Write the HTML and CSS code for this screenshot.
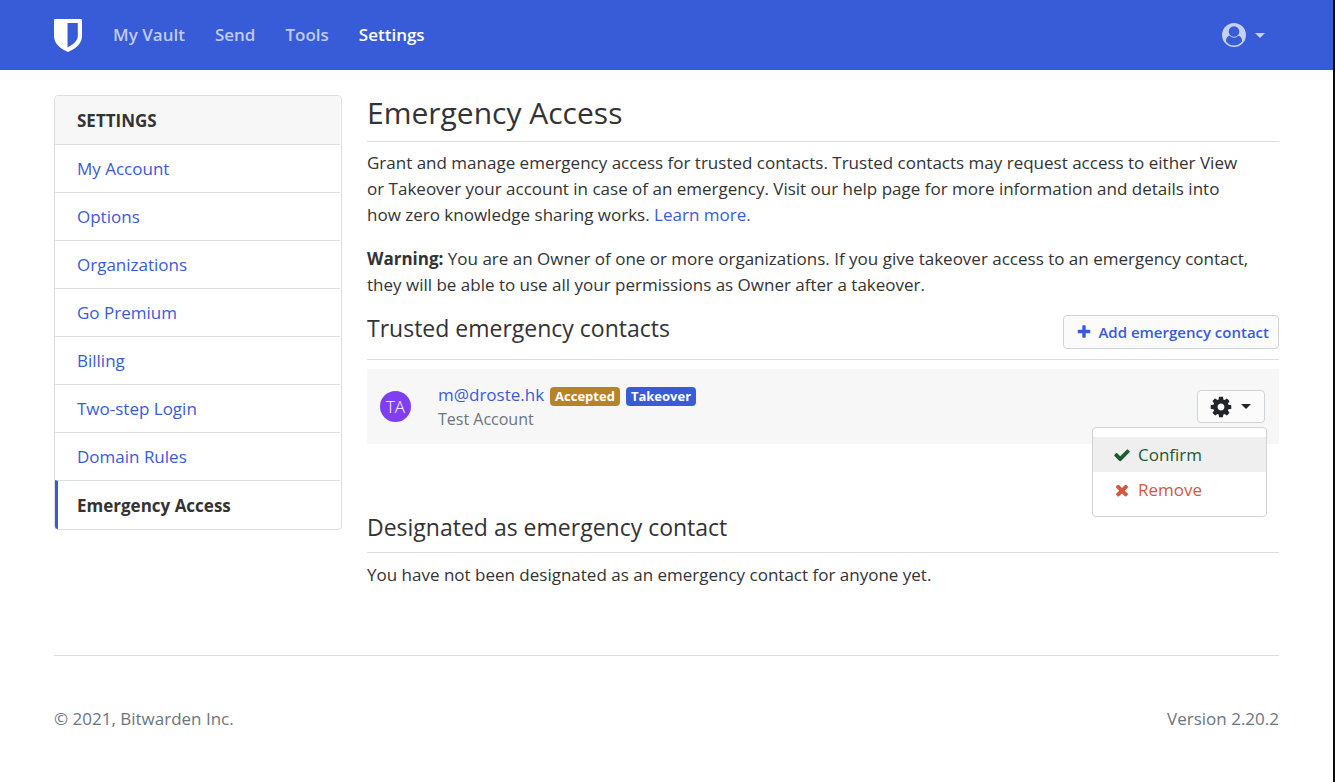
FILE: index.html
```
<!DOCTYPE html>
<html lang="en">
<head>
  <meta charset="UTF-8">
  <meta name="viewport" content="width=device-width, initial-scale=1">
  <title>Emergency Access | Bitwarden Web Vault</title>
  <link rel="stylesheet" href="styles.css">
</head>
<body>
<header class="navbar">
  <div class="container navbar-inner">
    <a href="#" class="logo" aria-label="Bitwarden">
      <svg viewBox="0 0 28 33" width="28" height="33"><path fill="#fff" fill-rule="evenodd" d="M1.200 0h25.600Q28 0 28 1.200V17c0 7-5.500 12.500-14 16C5.500 29.500 0 24 0 17V1.200Q0 0 1.200 0zM13.500 4v24.500c6-3 10.300-7 10.300-11.500V4z"/></svg>
    </a>
    <nav class="nav">
      <a href="#">My Vault</a>
      <a href="#">Send</a>
      <a href="#">Tools</a>
      <a href="#" class="active">Settings</a>
    </nav>
    <button type="button" class="user-menu" aria-label="Account">
      <svg viewBox="0 0 24 24" width="24" height="24"><path fill="currentColor" fill-rule="evenodd" d="M12 0a12 12 0 1 1 0 24a12 12 0 0 1 0-24zM12 3.200a5.200 5.200 0 1 0 0 10.600a5.200 5.200 0 0 0 0-10.600zM7.700 12.800C5.200 13.200 4.100 15.200 3.900 18.200C5.800 20.900 8.700 22.500 12 22.500s6.200-1.600 8.100-4.300c-.2-3-1.300-5-3.800-5.400c-1.200 1.200-2.700 1.900-4.300 1.900s-3.100-.7-4.300-1.900z"/></svg>
      <span class="caret"></span>
    </button>
  </div>
</header>

<main class="container page">
  <aside class="card">
    <div class="card-header">SETTINGS</div>
    <nav class="list-group">
      <a href="#">My Account</a>
      <a href="#">Options</a>
      <a href="#">Organizations</a>
      <a href="#">Go Premium</a>
      <a href="#">Billing</a>
      <a href="#">Two-step Login</a>
      <a href="#">Domain Rules</a>
      <a href="#" class="active">Emergency Access</a>
    </nav>
  </aside>

  <div class="content">
    <div class="page-header">
      <h1>Emergency Access</h1>
    </div>
    <p>Grant and manage emergency access for trusted contacts. Trusted contacts may request access to either View or Takeover your account in case of an emergency. Visit our help page for more information and details into how zero knowledge sharing works. <a href="#">Learn more.</a></p>
    <p><b>Warning:</b> You are an Owner of one or more organizations. If you give takeover access to an emergency contact, they will be able to use all your permissions as Owner after a takeover.</p>

    <div class="section-header">
      <h2>Trusted emergency contacts</h2>
      <button type="button" class="btn btn-add">
        <svg viewBox="0 0 1792 1792" width="16" height="16"><path fill="currentColor" d="M1600 736v192q0 40-28 68t-68 28h-416v416q0 40-28 68t-68 28h-192q-40 0-68-28t-28-68v-416h-416q-40 0-68-28t-28-68v-192q0-40 28-68t68-28h416v-416q0-40 28-68t68-28h192q40 0 68 28t28 68v416h416q40 0 68 28t28 68z"/></svg>
        Add emergency contact
      </button>
    </div>
    <table class="contacts">
      <tbody>
        <tr>
          <td class="col-avatar"><span class="avatar">TA</span></td>
          <td class="col-contact">
            <div class="contact-name">
              <a href="#">m@droste.hk</a>
              <span class="badge badge-warning">Accepted</span>
              <span class="badge badge-primary">Takeover</span>
            </div>
            <small>Test Account</small>
          </td>
          <td class="col-options">
            <div class="dropdown">
              <button type="button" class="btn btn-options" aria-label="Options" aria-expanded="true">
                <svg viewBox="0 0 1792 1792" width="24" height="24"><path fill="currentColor" d="M1152 896q0-106-75-181t-181-75-181 75-75 181 75 181 181 75 181-75 75-181zm512-109v222q0 12-8 23t-20 13l-185 28q-19 54-39 91 35 50 107 138 10 12 10 25t-9 23q-27 37-99 108t-94 71q-12 0-26-9l-138-108q-44 23-91 38-16 136-29 186-7 28-36 28h-222q-14 0-24.500-8.500t-11.500-21.500l-28-184q-49-16-90-37l-141 107q-10 9-25 9-14 0-25-11-126-114-165-168-7-10-7-23 0-12 8-23 15-21 51-66.500t54-70.500q-27-50-41-99l-183-27q-13-2-21-12.500t-8-23.500v-222q0-12 8-23t19-13l186-28q14-46 39-92-40-57-107-138-10-12-10-24 0-10 9-23 26-36 98.500-107.500t94.500-71.500q13 0 26 10l138 107q44-23 91-38 16-136 29-186 7-28 36-28h222q14 0 24.500 8.500t11.500 21.500l28 184q49 16 90 37l142-107q9-9 24-9 13 0 25 10 129 119 165 170 7 8 7 22 0 12-8 23-15 21-51 66.500t-54 70.500q26 50 41 98l183 28q13 2 21 12.500t8 23.500z"/></svg>
                <span class="caret"></span>
              </button>
              <div class="dropdown-menu">
                <button type="button" class="item-confirm">
                  <svg viewBox="0 0 1792 1792" width="18" height="18"><path fill="currentColor" d="M1671 566q0 40-28 68l-724 724-136 136q-28 28-68 28t-68-28l-136-136-362-362q-28-28-28-68t28-68l136-136q28-28 68-28t68 28l294 295 656-657q28-28 68-28t68 28l136 136q28 28 28 68z"/></svg>
                  Confirm
                </button>
                <button type="button" class="item-remove">
                  <svg viewBox="0 0 1792 1792" width="18" height="18"><path fill="currentColor" d="M1490 1322q0 40-28 68l-136 136q-28 28-68 28t-68-28l-294-294-294 294q-28 28-68 28t-68-28l-136-136q-28-28-28-68t28-68l294-294-294-294q-28-28-28-68t28-68l136-136q28-28 68-28t68 28l294 294 294-294q28-28 68-28t68 28l136 136q28 28 28 68t-28 68l-294 294 294 294q28 28 28 68z"/></svg>
                  Remove
                </button>
              </div>
            </div>
          </td>
        </tr>
      </tbody>
    </table>

    <div class="section-header section-designated">
      <h2>Designated as emergency contact</h2>
    </div>
    <p>You have not been designated as an emergency contact for anyone yet.</p>
  </div>
</main>

<footer class="container footer">
  <span>© 2021, Bitwarden Inc.</span>
  <span>Version 2.20.2</span>
</footer>
</body>
</html>
```
FILE: styles.css
```
* {
  box-sizing: border-box;
}

body {
  margin: 0;
  min-height: 100vh;
  border-right: 2px solid #0b0b12;
  background: #fff;
  color: #333;
  font-family: "Open Sans", "Liberation Sans", sans-serif;
  font-size: 17px;
  line-height: 26px;
}

a {
  color: #3a5bd8;
  text-decoration: none;
}

button {
  font: inherit;
  cursor: pointer;
}

svg {
  display: block;
  flex: none;
}

h1,
h2 {
  margin: 0;
  font-weight: 400;
}

p {
  margin: 0 0 18px;
  padding-right: 24px;
}

.container {
  margin: 0 54px;
}

/* top bar */
.navbar {
  background: #385cd7;
}

.navbar-inner {
  display: flex;
  align-items: center;
  height: 70px;
}

.nav {
  display: flex;
  gap: 30px;
  flex: 1;
  margin-left: 31px;
  font-weight: 600;
}

.nav a {
  color: #c0cbf3;
}

.nav .active {
  color: #fff;
}

.user-menu {
  display: flex;
  align-items: center;
  gap: 9px;
  margin-right: 14px;
  padding: 0;
  border: 0;
  background: none;
  color: #c5d0f5;
}

.caret {
  border: 5px solid transparent;
  border-top-color: currentColor;
  border-bottom: 0;
}

/* layout */
.page {
  display: grid;
  grid-template-columns: 288px 1fr;
  gap: 25px;
  align-items: start;
  padding-top: 25px;
}

/* settings menu */
.card {
  padding-right: 1px;
  border: 1px solid #dedede;
  border-radius: 4px;
  overflow: hidden;
}

.card-header,
.list-group a {
  display: block;
  height: 48px;
  padding: 11px 22px;
}

.card-header {
  padding-top: 12px;
  background: #f7f7f7;
  font-weight: 700;
}

.list-group a {
  border-top: 1px solid #dedede;
}

.list-group .active {
  height: 49px;
  padding-top: 12px;
  padding-left: 19px;
  border-left: 3px solid #385cd7;
  color: #333;
  font-weight: 700;
}

/* content */
.page-header {
  margin-bottom: 8px;
  padding-bottom: 10px;
  border-bottom: 1px solid #dedede;
}

h1 {
  font-size: 30px;
  line-height: 36px;
}

.section-header {
  display: flex;
  align-items: flex-start;
  justify-content: space-between;
  margin-top: -1px;
  padding-bottom: 10px;
  border-bottom: 1px solid #dedede;
}

h2 {
  font-size: 23px;
  line-height: 26px;
}

.btn {
  display: flex;
  align-items: center;
  border: 1px solid #ced4da;
  border-radius: 4px;
  background: #fbfbfb;
}

.btn-add {
  gap: 6px;
  height: 34px;
  padding: 0 9px 0 12px;
  color: #3a5bd8;
  font-size: 15px;
  font-weight: 600;
}

.contacts {
  width: 100%;
  margin-top: 9px;
  border-collapse: collapse;
  background: #f7f7f7;
}

.contacts td {
  height: 75px;
  padding: 0;
}

.contacts .col-avatar {
  width: 71px;
  padding-left: 13px;
}

.contacts .col-contact {
  padding-bottom: 2px;
}

.avatar {
  display: block;
  width: 31px;
  height: 31px;
  border-radius: 50%;
  background: #7f3ff0;
  color: #fff;
  font-size: 17px;
  font-weight: 300;
  line-height: 31px;
  text-align: center;
}

.contact-name {
  display: flex;
  align-items: baseline;
  gap: 6px;
}

.badge {
  padding: 0 5px;
  border-radius: 4px;
  color: #fff;
  font-size: 13px;
  font-weight: 700;
  line-height: 19px;
}

.badge-warning {
  background: #b8822a;
}

.badge-primary {
  background: #385cd7;
}

small {
  display: block;
  color: #6c757d;
  font-size: 16px;
  line-height: 22px;
}

.contacts .col-options {
  width: 82px;
  padding-right: 14px;
}

.dropdown {
  position: relative;
}

.btn-options {
  gap: 8px;
  width: 68px;
  height: 33px;
  padding: 0 11px;
  color: #212529;
}

.dropdown-menu {
  position: absolute;
  top: 100%;
  right: -2px;
  width: 175px;
  margin-top: 4px;
  padding: 9px 0;
  border: 1px solid #d2d2d2;
  border-radius: 4px;
  background: #fff;
}

.dropdown-menu button {
  display: flex;
  align-items: center;
  gap: 7px;
  width: 100%;
  height: 35px;
  padding: 0 20px;
  border: 0;
  background: none;
}

.dropdown-menu .item-confirm {
  background: #efefef;
  color: #1c5a30;
}

.dropdown-menu .item-remove {
  color: #cf5a3c;
}

.section-designated {
  margin-top: 70px;
  margin-bottom: 9px;
  padding-bottom: 12px;
}

/* footer */
.footer {
  display: flex;
  justify-content: space-between;
  margin-top: 49px;
  padding: 50px 0;
  border-top: 1px solid #dedede;
  color: #6c757d;
}
```
